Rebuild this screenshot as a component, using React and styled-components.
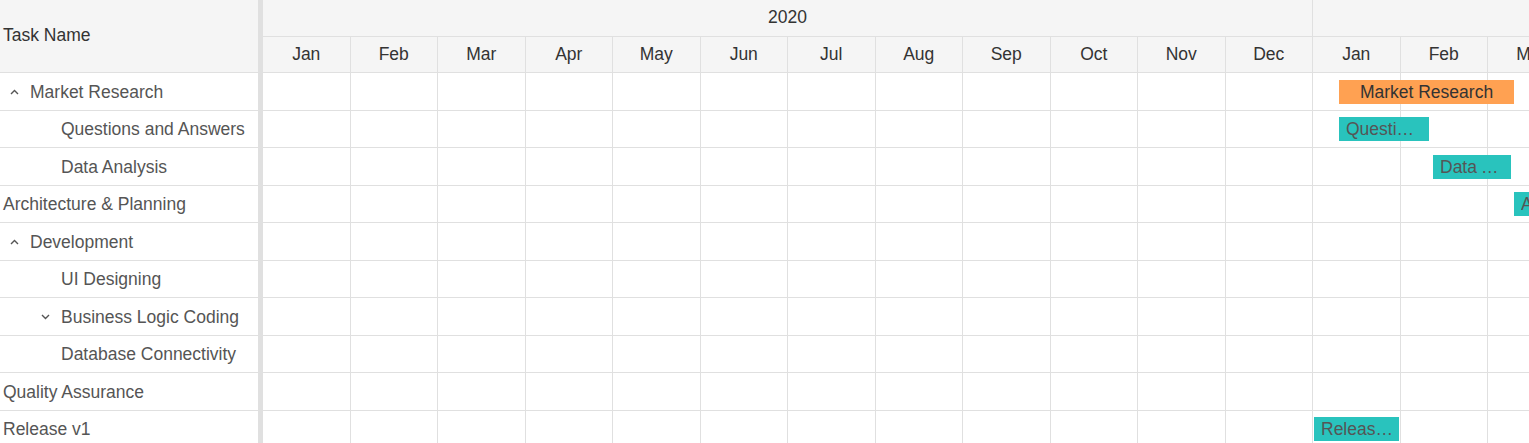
import React from 'react';
import styled, { createGlobalStyle } from 'styled-components';

const MONTH_W = 87.5;
const ROW_H = 37.5;
const months = ['Jan', 'Feb', 'Mar', 'Apr', 'May', 'Jun', 'Jul', 'Aug', 'Sep', 'Oct', 'Nov', 'Dec'];
const timeline = [...months, ...months];

const tasks = [
    { name: 'Market Research', level: 0, toggle: 'up', bar: { left: 1076, width: 175, kind: 'parent' } },
    { name: 'Questions and Answers', level: 1, bar: { left: 1076, width: 90 } },
    { name: 'Data Analysis', level: 1, bar: { left: 1170, width: 78 } },
    { name: 'Architecture & Planning', level: 0, bar: { left: 1251, width: 120 } },
    { name: 'Development', level: 0, toggle: 'up' },
    { name: 'UI Designing', level: 1 },
    { name: 'Business Logic Coding', level: 1, toggle: 'down' },
    { name: 'Database Connectivity', level: 1 },
    { name: 'Quality Assurance', level: 0 },
    { name: 'Release v1', level: 0, bar: { left: 1051, width: 85 } },
];

const GlobalStyle = createGlobalStyle`
  html, body {
    margin: 0;
    padding: 0;
    background: #fff;
    overflow: hidden;
  }
  * {
    box-sizing: border-box;
  }
`;

const Gantt = styled.div`
  display: flex;
  width: 1529px;
  height: 443px;
  overflow: hidden;
  font-family: 'Liberation Sans', Arial, sans-serif;
  font-size: 17.5px;
`;

const TreePane = styled.div`
  width: 258px;
  flex: none;
  display: flex;
  flex-direction: column;
`;

const TreeHeader = styled.div`
  height: 73px;
  flex: none;
  display: flex;
  align-items: center;
  padding: 0 4px 2px 3px;
  background: #f5f5f5;
  border-bottom: 1px solid #e0e0e0;
  color: #333;
`;

const TreeRow = styled.div`
  height: ${ROW_H}px;
  flex: none;
  display: flex;
  align-items: center;
  padding-top: 2px;
  padding-left: ${(p) => 3 + p.$level * 31}px;
  border-bottom: 1px solid #e0e0e0;
  color: #555;
  white-space: nowrap;
`;

const Toggle = styled.span`
  width: 27px;
  flex: none;
  display: flex;
  align-items: center;
  padding-left: 7px;
  color: #555;
`;

const Splitter = styled.div`
  width: 5px;
  flex: none;
  background: #e0e0e0;
`;

const ChartPane = styled.div`
  flex: 1;
  min-width: 0;
  overflow: hidden;
  display: flex;
  flex-direction: column;
`;

const HeaderRow = styled.div`
  display: flex;
  height: ${(p) => p.$h}px;
  flex: none;
  background: #f5f5f5;
  border-bottom: 1px solid #e0e0e0;
  color: #333;
`;

const HeaderCell = styled.div`
  width: ${(p) => p.$w}px;
  flex: none;
  display: flex;
  align-items: center;
  justify-content: center;
  border-right: 1px solid #e0e0e0;
  padding-bottom: 1px;
`;

const ChartRow = styled.div`
  position: relative;
  display: flex;
  height: ${ROW_H}px;
  flex: none;
  border-bottom: 1px solid #e0e0e0;
`;

const GridCell = styled.div`
  width: ${MONTH_W}px;
  flex: none;
  border-right: 1px solid #e0e0e0;
`;

const Bar = styled.div`
  position: absolute;
  top: 6.5px;
  height: 24px;
  display: flex;
  align-items: center;
  justify-content: ${(p) => (p.$parent ? 'center' : 'flex-start')};
  padding: ${(p) => (p.$parent ? '1px 7px 0' : '1px 6px 0 7px')};
  background: ${(p) => (p.$parent ? '#ffa152' : '#29c3bd')};
  color: ${(p) => (p.$parent ? '#333' : '#555')};
  white-space: nowrap;
  overflow: hidden;
`;

const BarLabel = styled.span`
  overflow: hidden;
  text-overflow: ellipsis;
`;

const Chevron = ({ dir }) => (
    <svg width="9" height="6" viewBox="0 0 9 6" fill="none">
        <path
            d={dir === 'up' ? 'M1 5 L4.5 1.5 L8 5' : 'M1 1 L4.5 4.5 L8 1'}
            stroke="currentColor"
            strokeWidth="1.4"
        />
    </svg>
);

const App = () => (
    <>
        <GlobalStyle />
        <Gantt>
            <TreePane>
                <TreeHeader>Task Name</TreeHeader>
                {tasks.map((t) => (
                    <TreeRow key={t.name} $level={t.level}>
                        {(t.toggle || t.level > 0) && (
                            <Toggle>{t.toggle && <Chevron dir={t.toggle} />}</Toggle>
                        )}
                        {t.name}
                    </TreeRow>
                ))}
            </TreePane>
            <Splitter />
            <ChartPane>
                <HeaderRow $h={37}>
                    <HeaderCell $w={MONTH_W * 12}>2020</HeaderCell>
                    <HeaderCell $w={MONTH_W * 12}>2021</HeaderCell>
                </HeaderRow>
                <HeaderRow $h={36}>
                    {timeline.map((m, i) => (
                        <HeaderCell key={i} $w={MONTH_W}>
                            {m}
                        </HeaderCell>
                    ))}
                </HeaderRow>
                {tasks.map((t) => (
                    <ChartRow key={t.name}>
                        {timeline.map((m, i) => (
                            <GridCell key={i} />
                        ))}
                        {t.bar && (
                            <Bar
                                $parent={t.bar.kind === 'parent'}
                                style={{ left: t.bar.left, width: t.bar.width }}
                            >
                                <BarLabel>{t.name}</BarLabel>
                            </Bar>
                        )}
                    </ChartRow>
                ))}
            </ChartPane>
        </Gantt>
    </>
);

export default App;
